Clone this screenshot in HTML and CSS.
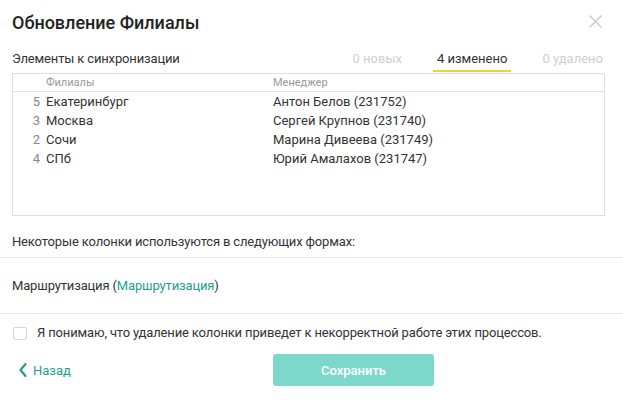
FILE: index.html
```html
<!DOCTYPE html>
<html lang="ru">
<head>
    <meta charset="UTF-8">
    <title>Обновление Филиалы</title>
    <link rel="stylesheet" href="styles.css">
</head>
<body>
    <div class="dialog">
        <div class="dialog-header">
            <h1>Обновление Филиалы</h1>
            <button class="close-button">
                <svg width="13" height="13" viewBox="0 0 13 13">
                    <path d="M0.5 0.5 L12.5 12.5 M12.5 0.5 L0.5 12.5" stroke="#c4c4c4" stroke-width="1.2" fill="none"/>
                </svg>
            </button>
        </div>

        <div class="sync-row">
            <span class="sync-label">Элементы к синхронизации</span>
            <div class="tabs">
                <span class="tab">0 новых</span>
                <span class="tab active">4 изменено</span>
                <span class="tab">0 удалено</span>
            </div>
        </div>

        <div class="sync-table">
            <div class="table-row table-head">
                <span class="cell-num"></span>
                <span class="cell-name">Филиалы</span>
                <span class="cell-manager">Менеджер</span>
            </div>
            <div class="table-row">
                <span class="cell-num">5</span>
                <span class="cell-name">Екатеринбург</span>
                <span class="cell-manager">Антон Белов (231752)</span>
            </div>
            <div class="table-row">
                <span class="cell-num">3</span>
                <span class="cell-name">Москва</span>
                <span class="cell-manager">Сергей Крупнов (231740)</span>
            </div>
            <div class="table-row">
                <span class="cell-num">2</span>
                <span class="cell-name">Сочи</span>
                <span class="cell-manager">Марина Дивеева (231749)</span>
            </div>
            <div class="table-row">
                <span class="cell-num">4</span>
                <span class="cell-name">СПб</span>
                <span class="cell-manager">Юрий Амалахов (231747)</span>
            </div>
        </div>

        <div class="notice">Некоторые колонки используются в следующих формах:</div>

        <div class="forms-list">
            Маршрутизация (<a href="#" class="form-link">Маршрутизация</a>)
        </div>

        <label class="confirm-row">
            <span class="checkbox"></span>
            <span>Я понимаю, что удаление колонки приведет к некорректной работе этих процессов.</span>
        </label>

        <div class="dialog-footer">
            <a href="#" class="back-link">
                <svg width="8" height="14" viewBox="0 0 8 14">
                    <path d="M6.5 1 L1.5 7 L6.5 13" stroke="#1f9e8e" stroke-width="2.2" fill="none" stroke-linecap="round" stroke-linejoin="round"/>
                </svg>
                <span>Назад</span>
            </a>
            <button class="save-button" disabled>Сохранить</button>
        </div>
    </div>
</body>
</html>
```

FILE: styles.css
```css
* {
    margin: 0;
    padding: 0;
    box-sizing: border-box;
}

body {
    font-family: Roboto, "Noto Sans", sans-serif;
    font-size: 13px;
    color: #333;
    background: #fff;
}

.dialog {
    width: 623px;
    height: 405px;
    display: flex;
    flex-direction: column;
}

.dialog-header {
    display: flex;
    justify-content: space-between;
    align-items: flex-start;
    padding: 12px 21px 0 12px;
}

.dialog-header h1 {
    font-size: 18px;
    line-height: 22px;
    font-weight: 500;
    color: #222;
}

.close-button {
    background: none;
    border: none;
    margin-top: 3px;
    cursor: pointer;
}

.sync-row {
    display: flex;
    justify-content: space-between;
    align-items: flex-end;
    margin-top: 15px;
    padding: 0 16px 0 12px;
}

.sync-label {
    line-height: 20px;
    padding-bottom: 3px;
    letter-spacing: -0.15px;
}

.tabs {
    display: flex;
    gap: 27px;
}

.tab {
    line-height: 20px;
    padding: 0 4px 1px;
    border-bottom: 2px solid transparent;
    color: #cfcfcf;
}

.tab.active {
    color: #333;
    border-bottom-color: #f2cf3b;
}

.sync-table {
    margin: 1px 18px 0 12px;
    height: 143px;
    border: 1px solid #dedede;
}

.table-row {
    display: flex;
    height: 19px;
    line-height: 19px;
}

.table-head {
    height: 18px;
    line-height: 17px;
    font-size: 11px;
    color: #999;
    border-bottom: 1px solid #e4e4e4;
}

.cell-num {
    width: 27px;
    text-align: right;
    color: #888;
}

.cell-name {
    width: 233px;
    padding-left: 6px;
}

.cell-manager {
    flex: 1;
}

.table-head .cell-name,
.table-head .cell-manager {
    color: #999;
}

.notice {
    margin-top: 16px;
    padding: 0 12px 5px;
    line-height: 20px;
    letter-spacing: -0.15px;
    border-bottom: 1px solid #e6e6e6;
}

.forms-list {
    padding: 18px 12px 17px;
    line-height: 20px;
    letter-spacing: -0.15px;
    border-bottom: 1px solid #e6e6e6;
}

.form-link {
    color: #1f9e8e;
    text-decoration: none;
}

.confirm-row {
    display: flex;
    align-items: center;
    gap: 10px;
    padding: 9px 12px 0 13px;
    line-height: 20px;
    letter-spacing: -0.15px;
}

.checkbox {
    width: 14px;
    height: 13px;
    border: 1px solid #d6d6d6;
    border-radius: 2px;
}

.dialog-footer {
    display: flex;
    align-items: center;
    margin-top: 11px;
    padding-left: 19px;
}

.back-link {
    display: flex;
    align-items: center;
    gap: 6px;
    width: 254px;
    color: #1f9e8e;
    text-decoration: none;
}

.save-button {
    width: 161px;
    height: 32px;
    border: none;
    border-radius: 3px;
    background: #7dd8cc;
    color: #fff;
    font-family: Roboto, "Noto Sans", sans-serif;
    font-size: 13px;
    font-weight: 500;
}
```
